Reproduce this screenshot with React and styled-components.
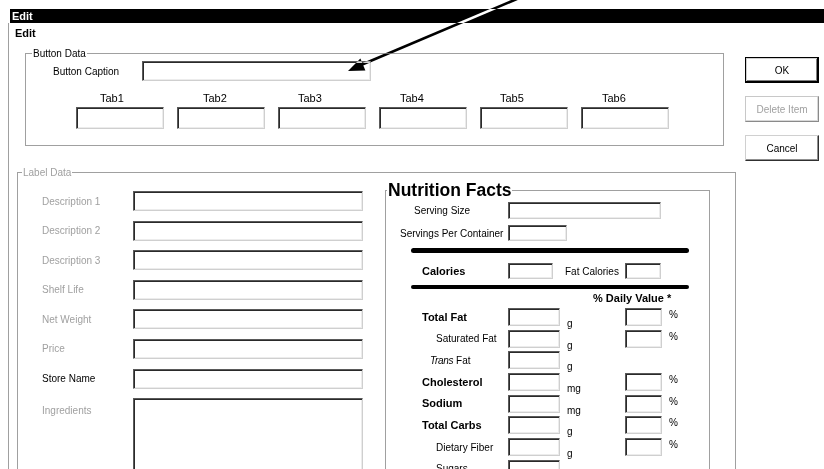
import React from 'react';
import styled, { createGlobalStyle } from 'styled-components';

const GlobalStyle = createGlobalStyle`
    html, body {
        margin: 0;
        padding: 0;
        overflow: hidden;
        background: #fff;
    }
    body {
        font-family: "Liberation Sans", Arial, sans-serif;
        font-size: 10px;
        color: #000;
    }
`;

const Page = styled.div`
    position: relative;
    width: 824px;
    height: 469px;
    overflow: hidden;
`;

const TitleBar = styled.div`
    margin: 9px 0 0 10px;
    height: 14px;
    padding-left: 2px;
    background: #000;
    color: #fff;
    font-size: 11px;
    font-weight: 700;
    line-height: 14px;
`;

const Dialog = styled.div`
    margin-left: 8px;
    height: 446px;
    border-left: 1px solid #a0a0a0;
`;

const Heading = styled.div`
    padding: 3px 0 0 6px;
    font-size: 11px;
    font-weight: 700;
    line-height: 14px;
`;

const TopRow = styled.div`
    display: flex;
    align-items: flex-start;
    margin-top: 13px;
`;

const GroupBox = styled.div`
    position: relative;
    box-sizing: border-box;
    border: 1px solid #a0a0a0;
    margin-left: ${p => p.$left}px;
    margin-top: ${p => p.$top || 0}px;
    width: ${p => p.$width}px;
    height: ${p => p.$height}px;
    padding: ${p => p.$pad};
`;

const GroupCaption = styled.span`
    position: absolute;
    top: ${p => (p.$big ? -11 : -7)}px;
    left: ${p => p.$left}px;
    padding: 0 1px;
    background: #fff;
    color: ${p => (p.$disabled ? '#a0a0a0' : '#000')};
    font-size: ${p => (p.$big ? '17.5px' : '10px')};
    font-weight: ${p => (p.$big ? 700 : 400)};
    line-height: ${p => (p.$big ? 20 : 13)}px;
`;

const Field = styled.input`
    box-sizing: border-box;
    display: block;
    width: ${p => p.$w}px;
    height: ${p => p.$h}px;
    margin: 0;
    padding: 0 2px;
    background: #fff;
    border: 1px solid;
    border-color: #5a5a5a #cfcfcf #cfcfcf #5a5a5a;
    box-shadow: inset 1px 1px 0 #2a2a2a, inset -1px -1px 0 #ececec;
    outline: none;
    font: inherit;
`;

const Memo = styled(Field).attrs({ as: 'textarea' })`
    resize: none;
    overflow: hidden;
`;

const CaptionRow = styled.div`
    display: flex;
    align-items: center;
`;

const Label = styled.span`
    flex: none;
    width: ${p => p.$w}px;
    padding-left: ${p => p.$indent || 0}px;
    box-sizing: border-box;
    line-height: 13px;
    white-space: nowrap;
    color: ${p => (p.$disabled ? '#a0a0a0' : '#000')};
`;

const TabRow = styled.div`
    display: flex;
    gap: 13px;
    margin: 11px 0 0 23px;
`;

const TabCell = styled.div`
    display: flex;
    flex-direction: column;
`;

const TabName = styled.span`
    padding-left: ${p => p.$shift}px;
    margin-bottom: 2px;
    font-size: 11px;
    line-height: 13px;
`;

const ButtonColumn = styled.div`
    display: flex;
    flex-direction: column;
    gap: 13px;
    margin: 4px 0 0 21px;
`;

const DialogButton = styled.button`
    box-sizing: border-box;
    width: 74px;
    height: 26px;
    margin: 0;
    padding: 0;
    background: #fff;
    font: inherit;
    color: ${p => (p.$disabled ? '#a0a0a0' : '#000')};
    border: 1px solid;
    border-color: ${p => (p.$default ? '#000' : p.$disabled ? '#c8c8c8 #8a8a8a #8a8a8a #c8c8c8' : '#d0d0d0 #303030 #303030 #d0d0d0')};
    box-shadow: ${p => (p.$default ? 'inset -1px -1px 0 #000, inset 1px 1px 0 #d0d0d0, inset -2px -2px 0 #808080' : p.$disabled ? 'inset -1px -1px 0 #d8d8d8' : 'inset -1px -1px 0 #909090')};
`;

const LabelBody = styled.div`
    display: flex;
    align-items: flex-start;
`;

const FieldColumn = styled.div`
    display: flex;
    flex-direction: column;
    gap: 9.6px;
    margin-top: 1px;
`;

const FieldRow = styled.div`
    display: flex;
    align-items: ${p => (p.$tall ? 'flex-start' : 'center')};

    & > span {
        margin-top: ${p => (p.$tall ? 6 : 0)}px;
    }
`;

const NutritionBody = styled.div`
    display: flex;
    flex-direction: column;
`;

const FactRow = styled.div`
    display: flex;
    align-items: center;
    margin-top: ${p => p.$top || 0}px;
`;

const FactLabel = styled.span`
    flex: none;
    width: 122px;
    box-sizing: border-box;
    padding-left: ${p => p.$indent}px;
    font-size: ${p => (p.$bold ? '11px' : '10px')};
    font-weight: ${p => (p.$bold ? 700 : 400)};
    line-height: 13px;
    white-space: nowrap;

    i {
        font-style: italic;
        letter-spacing: -0.3px;
    }
`;

const SideLabel = styled.span`
    flex: none;
    box-sizing: border-box;
    width: ${p => p.$w}px;
    padding-left: ${p => p.$pad}px;
    line-height: 13px;
    white-space: nowrap;
`;

const Rule = styled.div`
    margin: ${p => p.$top}px 0 0 25px;
    width: 278px;
    height: ${p => p.$thick}px;
    border-radius: 3px;
    background: #000;
`;

const DailyHeading = styled.div`
    margin-top: 3px;
    padding-left: 207px;
    font-size: 11px;
    font-weight: 700;
    line-height: 12px;
`;

const NutrientList = styled.div`
    display: flex;
    flex-direction: column;
    gap: 3.7px;
    margin-top: 4px;
`;

const NutrientRow = styled.div`
    display: flex;
    align-items: center;
    height: 18px;
`;

const Unit = styled.span`
    flex: none;
    width: 65px;
    box-sizing: border-box;
    padding-left: 7px;
    align-self: flex-end;
    margin-bottom: -4px;
    line-height: 12px;
`;

const Percent = styled.span`
    padding-left: 7px;
    align-self: flex-start;
    margin-top: 1px;
    line-height: 12px;
`;

const Pointer = styled.svg`
    position: absolute;
    left: 0;
    top: 0;
    width: 824px;
    height: 469px;
    pointer-events: none;
    mix-blend-mode: difference;
`;

const tabs = [
    { name: 'Tab1', shift: 24 },
    { name: 'Tab2', shift: 26 },
    { name: 'Tab3', shift: 20 },
    { name: 'Tab4', shift: 21 },
    { name: 'Tab5', shift: 20 },
    { name: 'Tab6', shift: 21 },
];

const labelFields = [
    { name: 'Description 1', disabled: true },
    { name: 'Description 2', disabled: true },
    { name: 'Description 3', disabled: true },
    { name: 'Shelf Life', disabled: true },
    { name: 'Net Weight', disabled: true },
    { name: 'Price', disabled: true },
    { name: 'Store Name', disabled: false },
];

const nutrients = [
    { name: 'Total Fat', bold: true, indent: 36, unit: 'g', daily: true },
    { name: 'Saturated Fat', indent: 50, unit: 'g', daily: true },
    { name: 'Fat', trans: true, indent: 44, unit: 'g' },
    { name: 'Cholesterol', bold: true, indent: 36, unit: 'mg', daily: true },
    { name: 'Sodium', bold: true, indent: 36, unit: 'mg', daily: true },
    { name: 'Total Carbs', bold: true, indent: 36, unit: 'g', daily: true },
    { name: 'Dietary Fiber', indent: 50, unit: 'g', daily: true },
    { name: 'Sugars', indent: 50, unit: '' },
];

const App = () => {
    return (
        <Page>
            <GlobalStyle />
            <TitleBar>Edit</TitleBar>
            <Dialog>
                <Heading>Edit</Heading>
                <TopRow>
                    <GroupBox $left={16} $width={699} $height={93} $pad="7px 0 0 27px">
                        <GroupCaption $left={6}>Button Data</GroupCaption>
                        <CaptionRow>
                            <Label $w={89}>Button Caption</Label>
                            <Field readOnly $w={229} $h={20} />
                        </CaptionRow>
                        <TabRow>
                            {tabs.map(t => (
                                <TabCell key={t.name}>
                                    <TabName $shift={t.shift}>{t.name}</TabName>
                                    <Field readOnly $w={88} $h={22} />
                                </TabCell>
                            ))}
                        </TabRow>
                    </GroupBox>
                    <ButtonColumn>
                        <DialogButton $default>OK</DialogButton>
                        <DialogButton $disabled>Delete Item</DialogButton>
                        <DialogButton>Cancel</DialogButton>
                    </ButtonColumn>
                </TopRow>

                <GroupBox $left={8} $top={11} $width={719} $height={320} $pad="17px 0 0 24px">
                    <GroupCaption $left={4} $disabled>Label Data</GroupCaption>
                    <LabelBody>
                        <FieldColumn>
                            {labelFields.map(f => (
                                <FieldRow key={f.name}>
                                    <Label $w={91} $disabled={f.disabled}>{f.name}</Label>
                                    <Field readOnly $w={230} $h={20} />
                                </FieldRow>
                            ))}
                            <FieldRow $tall>
                                <Label $w={91} $disabled>Ingredients</Label>
                                <Memo readOnly $w={230} $h={110} />
                            </FieldRow>
                        </FieldColumn>

                        <GroupBox $left={22} $width={325} $height={320} $pad="11px 0 0 0">
                            <GroupCaption $left={1} $big>Nutrition Facts</GroupCaption>
                            <NutritionBody>
                                <FactRow>
                                    <FactLabel $indent={28}>Serving Size</FactLabel>
                                    <Field readOnly $w={153} $h={17} />
                                </FactRow>
                                <FactRow $top={6}>
                                    <FactLabel $indent={14}>Servings Per Container</FactLabel>
                                    <Field readOnly $w={59} $h={16} />
                                </FactRow>
                                <Rule $top={7} $thick={5} />
                                <FactRow $top={10}>
                                    <FactLabel $indent={36} $bold>Calories</FactLabel>
                                    <Field readOnly $w={45} $h={16} />
                                    <SideLabel $w={72} $pad={12}>Fat Calories</SideLabel>
                                    <Field readOnly $w={36} $h={16} />
                                </FactRow>
                                <Rule $top={6} $thick={4} />
                                <DailyHeading>% Daily Value *</DailyHeading>
                                <NutrientList>
                                    {nutrients.map(n => (
                                        <NutrientRow key={n.name + n.indent}>
                                            <FactLabel $indent={n.indent} $bold={n.bold}>
                                                {n.trans ? <><i>Trans</i> </> : null}{n.name}
                                            </FactLabel>
                                            <Field readOnly $w={52} $h={18} />
                                            <Unit>{n.unit}</Unit>
                                            {n.daily && (
                                                <>
                                                    <Field readOnly $w={37} $h={18} />
                                                    <Percent>%</Percent>
                                                </>
                                            )}
                                        </NutrientRow>
                                    ))}
                                </NutrientList>
                            </NutritionBody>
                        </GroupBox>
                    </LabelBody>
                </GroupBox>
            </Dialog>

            {/* annotation arrow, inverted over the dark title bar */}
            <Pointer viewBox="0 0 824 469">
                <line x1="524" y1="-4" x2="361" y2="65" stroke="#fff" strokeWidth="2.6" />
                <polygon points="348,71 360.4,58.6 365.4,70.6" fill="#fff" />
            </Pointer>
        </Page>
    );
};

export default App;
